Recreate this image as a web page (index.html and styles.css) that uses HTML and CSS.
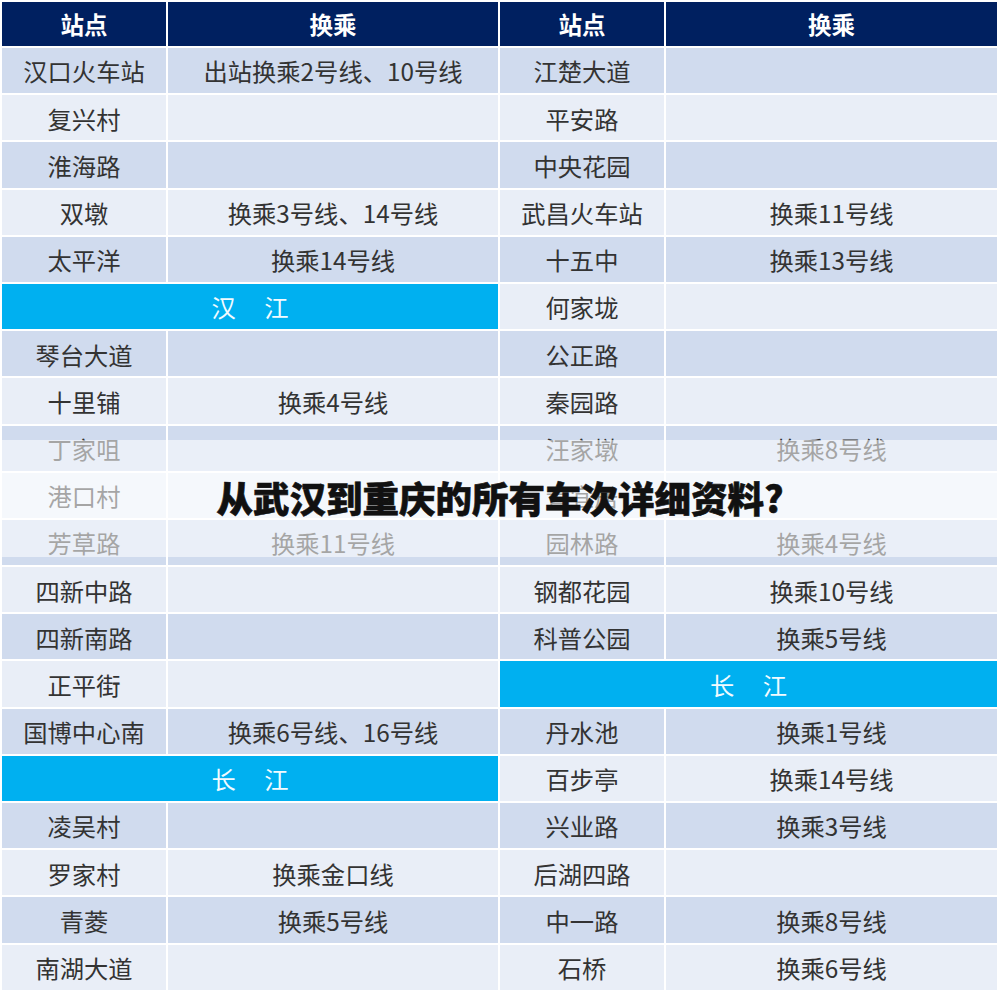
FILE: index.html
```html
<!DOCTYPE html>
<html lang="zh-CN">
<head>
<meta charset="utf-8">
<title>从武汉到重庆的所有车次详细资料?</title>
<link rel="stylesheet" href="styles.css">
</head>
<body>
<div class="page">
  <div class="table">
    <div class="row head"><div class="c">站点</div><div class="c">换乘</div><div class="c">站点</div><div class="c">换乘</div></div>
    <div class="row dark"><div class="c">汉口火车站</div><div class="c">出站换乘2号线、10号线</div><div class="c">江楚大道</div><div class="c"></div></div>
    <div class="row light"><div class="c">复兴村</div><div class="c"></div><div class="c">平安路</div><div class="c"></div></div>
    <div class="row dark"><div class="c">淮海路</div><div class="c"></div><div class="c">中央花园</div><div class="c"></div></div>
    <div class="row light"><div class="c">双墩</div><div class="c">换乘3号线、14号线</div><div class="c">武昌火车站</div><div class="c">换乘11号线</div></div>
    <div class="row dark"><div class="c">太平洋</div><div class="c">换乘14号线</div><div class="c">十五中</div><div class="c">换乘13号线</div></div>
    <div class="row light"><div class="c river">汉&emsp;江</div><div class="c">何家垅</div><div class="c"></div></div>
    <div class="row dark"><div class="c">琴台大道</div><div class="c"></div><div class="c">公正路</div><div class="c"></div></div>
    <div class="row light"><div class="c">十里铺</div><div class="c">换乘4号线</div><div class="c">秦园路</div><div class="c"></div></div>
    <div class="row dark"><div class="c">丁家咀</div><div class="c"></div><div class="c">汪家墩</div><div class="c">换乘8号线</div></div>
    <div class="row light"><div class="c">港口村</div><div class="c"></div><div class="c">青宜居</div><div class="c"></div></div>
    <div class="row dark"><div class="c">芳草路</div><div class="c">换乘11号线</div><div class="c">园林路</div><div class="c">换乘4号线</div></div>
    <div class="row light"><div class="c">四新中路</div><div class="c"></div><div class="c">钢都花园</div><div class="c">换乘10号线</div></div>
    <div class="row dark"><div class="c">四新南路</div><div class="c"></div><div class="c">科普公园</div><div class="c">换乘5号线</div></div>
    <div class="row light"><div class="c">正平街</div><div class="c"></div><div class="c river">长&emsp;江</div></div>
    <div class="row dark"><div class="c">国博中心南</div><div class="c">换乘6号线、16号线</div><div class="c">丹水池</div><div class="c">换乘1号线</div></div>
    <div class="row light"><div class="c river">长&emsp;江</div><div class="c">百步亭</div><div class="c">换乘14号线</div></div>
    <div class="row dark"><div class="c">凌吴村</div><div class="c"></div><div class="c">兴业路</div><div class="c">换乘3号线</div></div>
    <div class="row light"><div class="c">罗家村</div><div class="c">换乘金口线</div><div class="c">后湖四路</div><div class="c"></div></div>
    <div class="row dark"><div class="c">青菱</div><div class="c">换乘5号线</div><div class="c">中一路</div><div class="c">换乘8号线</div></div>
    <div class="row light"><div class="c">南湖大道</div><div class="c"></div><div class="c">石桥</div><div class="c">换乘6号线</div></div>
  </div>
  <div class="veil"></div>
  <h1 class="title">从武汉到重庆的所有车次详细资料?</h1>
</div>
</body>
</html>
```
FILE: styles.css
```css
html, body {
  margin: 0;
  padding: 0;
  background: #ffffff;
}

body {
  font-family: "Noto Sans CJK SC", "Noto Sans", sans-serif;
  color: #333333;
}

.page {
  position: relative;
  width: 1000px;
  height: 998px;
  overflow: hidden;
}

.table {
  display: flex;
  flex-direction: column;
  gap: 2px;
  padding: 2px 3px 0 2px;
}

.row {
  display: grid;
  grid-template-columns: 164px 330px 164px 331px;
  column-gap: 2px;
  height: 45.2px;
}

.row.head {
  height: 44px;
}

.c {
  display: flex;
  align-items: center;
  justify-content: center;
  padding-top: 2px;
  box-sizing: border-box;
  font-size: 24.3px;
  line-height: 1;
  white-space: nowrap;
}

.head .c {
  background: #002060;
  color: #ffffff;
  font-weight: 700;
  font-size: 23.5px;
  padding-top: 1px;
}

.dark .c {
  background: #d0dbee;
}

.light .c {
  background: #e9eef7;
}

.row .c.river {
  grid-column: span 2;
  background: #00b0f0;
  color: #f2fbff;
  letter-spacing: 2px;
  padding-left: 2px;
}

.veil {
  position: absolute;
  left: 0;
  right: 0;
  top: 440px;
  height: 117px;
  background: rgba(255, 255, 255, 0.56);
}

.title {
  position: absolute;
  left: 0;
  right: 0;
  top: 476px;
  margin: 0;
  text-align: center;
  font-size: 36.5px;
  line-height: 44px;
  font-weight: 900;
  color: #111111;
  -webkit-text-stroke: 0.6px #111111;
}
```
